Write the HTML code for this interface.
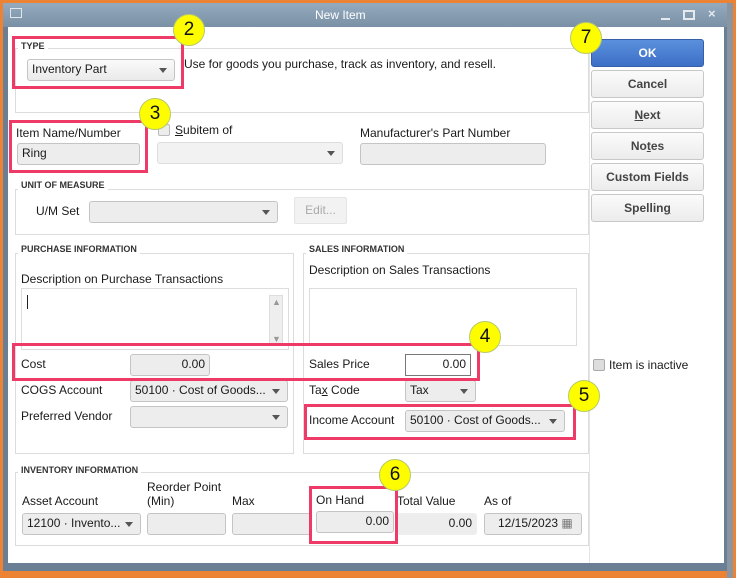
<!DOCTYPE html>
<html><head><style>
*{box-sizing:border-box;margin:0;padding:0}
body{width:736px;height:575px;background:#ec8234;position:relative;overflow:hidden;font-family:"Liberation Sans",sans-serif;font-size:12px;color:#1a1a1a}
.a{position:absolute}
.t{position:absolute;white-space:nowrap;line-height:14px}
.grp{position:absolute;border:1px solid #dcdcdc}
.gl{position:absolute;background:#fff;padding:0 3px;font-size:9px;font-weight:bold;color:#333;line-height:10px}
.f{position:absolute;background:#ededed;border:1px solid #c4c4c4;border-radius:3px;line-height:19px;padding:0 4px;white-space:nowrap;overflow:hidden}
.dd:after{content:"";position:absolute;right:7px;top:8px;border-left:4px solid transparent;border-right:4px solid transparent;border-top:5px solid #555}
.r{text-align:right}
.red{position:absolute;border:3px solid #ee3a66}
.c{position:absolute;width:32px;height:32px;border-radius:50%;background:#fdfd00;border:1px solid #b8c96a;font-size:19px;text-align:center;line-height:30px;color:#111}
.btn{position:absolute;left:591px;width:113px;height:28px;border:1px solid #c8c8c8;border-radius:3px;background:linear-gradient(#fbfbfb,#ececec);text-align:center;line-height:26px;font-weight:bold;color:#444;font-size:12px}
</style></head><body>
<div class="a" style="left:727px;top:3px;width:6px;height:575px;background:#8a95a0"></div>
<div class="a" style="left:3px;top:3px;width:724px;height:568px;background:#6a7f94"></div>
<div class="a" style="left:3px;top:3px;width:724px;height:24px;background:linear-gradient(#95aabd,#7990a6)"></div>
<div class="a" style="left:10px;top:8px;width:12px;height:10px;border:1px solid #dfe6ec"></div>
<div class="t" style="left:315px;top:8px;color:#fff;font-size:12px">New Item</div>
<div class="a" style="left:661px;top:18px;width:9px;height:2px;background:#e6eaee"></div>
<div class="a" style="left:683px;top:10px;width:12px;height:10px;border:2px solid #e6eaee"></div>
<div class="t" style="left:708px;top:7px;color:#e6eaee;font-weight:bold;font-size:13px">×</div>
<div class="a" style="left:8px;top:27px;width:716px;height:536px;background:#fff"></div>
<div class="a" style="left:589px;top:27px;width:1px;height:536px;background:#e4e4e4"></div>

<div class="grp" style="left:15px;top:48px;width:574px;height:65px"></div>
<div class="gl" style="left:18px;top:41px">TYPE</div>
<div class="f dd" style="left:27px;top:59px;width:148px;height:22px;background:linear-gradient(#fafafa,#eaeaea)">Inventory Part</div>
<div class="t" style="left:184px;top:57px">Use for goods you purchase, track as inventory, and resell.</div>

<div class="t" style="left:16px;top:126px">Item Name/Number</div>
<div class="f" style="left:17px;top:143px;width:123px;height:22px">Ring</div>
<div class="a" style="left:158px;top:124px;width:12px;height:12px;border:1px solid #bbb;background:#ececec;border-radius:2px"></div>
<div class="t" style="left:175px;top:123px"><u>S</u>ubitem of</div>
<div class="f dd" style="left:157px;top:142px;width:186px;height:22px;border-color:#ddd;background:#f2f2f2"></div>
<div class="t" style="left:360px;top:126px">Manufacturer's Part Number</div>
<div class="f" style="left:360px;top:143px;width:186px;height:22px"></div>

<div class="btn" style="top:39px;background:linear-gradient(#5a90dc,#3d6fc7);border-color:#365fa8;color:#fff">OK</div>
<div class="btn" style="top:70px">Cancel</div>
<div class="btn" style="top:101px"><u>N</u>ext</div>
<div class="btn" style="top:132px">No<u>t</u>es</div>
<div class="btn" style="top:163px">Custom Fields</div>
<div class="btn" style="top:194px">Spellin<u>g</u></div>

<div class="grp" style="left:15px;top:189px;width:574px;height:46px"></div>
<div class="gl" style="left:18px;top:180px">UNIT OF MEASURE</div>
<div class="t" style="left:36px;top:204px">U/M Set</div>
<div class="f dd" style="left:89px;top:201px;width:189px;height:22px"></div>
<div class="a" style="left:294px;top:197px;width:53px;height:27px;border:1px solid #e4e4e4;border-radius:2px;background:#f2f2f2;color:#aaa;text-align:center;line-height:25px">Edit...</div>

<div class="grp" style="left:15px;top:253px;width:279px;height:201px"></div>
<div class="gl" style="left:18px;top:244px">PURCHASE INFORMATION</div>
<div class="t" style="left:21px;top:272px">Description on Purchase Transactions</div>
<div class="a" style="left:21px;top:288px;width:268px;height:62px;border:1px solid #ddd"></div>
<div class="a" style="left:27px;top:295px;width:1px;height:14px;background:#222"></div>
<div class="a" style="left:269px;top:295px;width:14px;height:50px;background:#eee;border:1px solid #ddd"></div>
<div class="t" style="left:272px;top:295px;font-size:9px;color:#999">▲</div>
<div class="t" style="left:272px;top:332px;font-size:9px;color:#999">▼</div>

<div class="grp" style="left:303px;top:253px;width:286px;height:201px"></div>
<div class="gl" style="left:306px;top:244px">SALES INFORMATION</div>
<div class="t" style="left:309px;top:263px">Description on Sales Transactions</div>
<div class="a" style="left:309px;top:288px;width:268px;height:58px;border:1px solid #ddd"></div>

<div class="t" style="left:21px;top:357px">Cost</div>
<div class="f r" style="left:130px;top:354px;width:80px;height:22px">0.00</div>
<div class="t" style="left:309px;top:357px">Sales Price</div>
<div class="f r" style="left:405px;top:354px;width:66px;height:22px;background:#fff;border:1px solid #777;border-radius:0">0.00</div>
<div class="t" style="left:21px;top:383px">COGS Account</div>
<div class="f dd" style="left:130px;top:380px;width:158px;height:22px;padding-right:20px">50100 · Cost of Goods...</div>
<div class="t" style="left:309px;top:383px">Ta<u>x</u> Code</div>
<div class="f dd" style="left:405px;top:380px;width:71px;height:22px">Tax</div>
<div class="t" style="left:21px;top:409px">Preferred Vendor</div>
<div class="f dd" style="left:130px;top:406px;width:158px;height:22px"></div>
<div class="t" style="left:309px;top:413px">Income Account</div>
<div class="f dd" style="left:405px;top:410px;width:160px;height:22px;padding-right:20px">50100 · Cost of Goods...</div>

<div class="a" style="left:593px;top:359px;width:12px;height:12px;border:1px solid #aaa;background:#ddd;border-radius:2px"></div>
<div class="t" style="left:609px;top:358px">Item is inactive</div>

<div class="grp" style="left:15px;top:472px;width:574px;height:74px"></div>
<div class="gl" style="left:18px;top:465px">INVENTORY INFORMATION</div>
<div class="t" style="left:22px;top:494px">Asset Account</div>
<div class="t" style="left:147px;top:480px">Reorder Point</div>
<div class="t" style="left:147px;top:494px">(Min)</div>
<div class="t" style="left:232px;top:494px">Max</div>
<div class="t" style="left:316px;top:493px">On Hand</div>
<div class="t" style="left:397px;top:494px">Total Value</div>
<div class="t" style="left:484px;top:494px">As of</div>
<div class="f dd" style="left:22px;top:513px;width:119px;height:22px;padding-right:18px">12100 · Invento...</div>
<div class="f" style="left:147px;top:513px;width:79px;height:22px"></div>
<div class="f" style="left:232px;top:513px;width:80px;height:22px"></div>
<div class="f r" style="left:316px;top:511px;width:78px;height:22px">0.00</div>
<div class="f r" style="left:397px;top:513px;width:80px;height:22px;border-color:#eee">0.00</div>
<div class="f" style="left:484px;top:513px;width:98px;height:22px;padding-left:13px">12/15/2023 <span style="color:#777">▦</span></div>

<div class="red" style="left:12px;top:36px;width:172px;height:53px"></div>
<div class="red" style="left:9px;top:120px;width:139px;height:53px"></div>
<div class="red" style="left:12px;top:343px;width:468px;height:38px"></div>
<div class="red" style="left:304px;top:404px;width:272px;height:36px"></div>
<div class="red" style="left:309px;top:486px;width:89px;height:58px"></div>
<div class="c" style="left:173px;top:14px">2</div>
<div class="c" style="left:139px;top:98px">3</div>
<div class="c" style="left:469px;top:321px">4</div>
<div class="c" style="left:568px;top:380px">5</div>
<div class="c" style="left:379px;top:459px">6</div>
<div class="c" style="left:570px;top:22px">7</div>
</body></html>
